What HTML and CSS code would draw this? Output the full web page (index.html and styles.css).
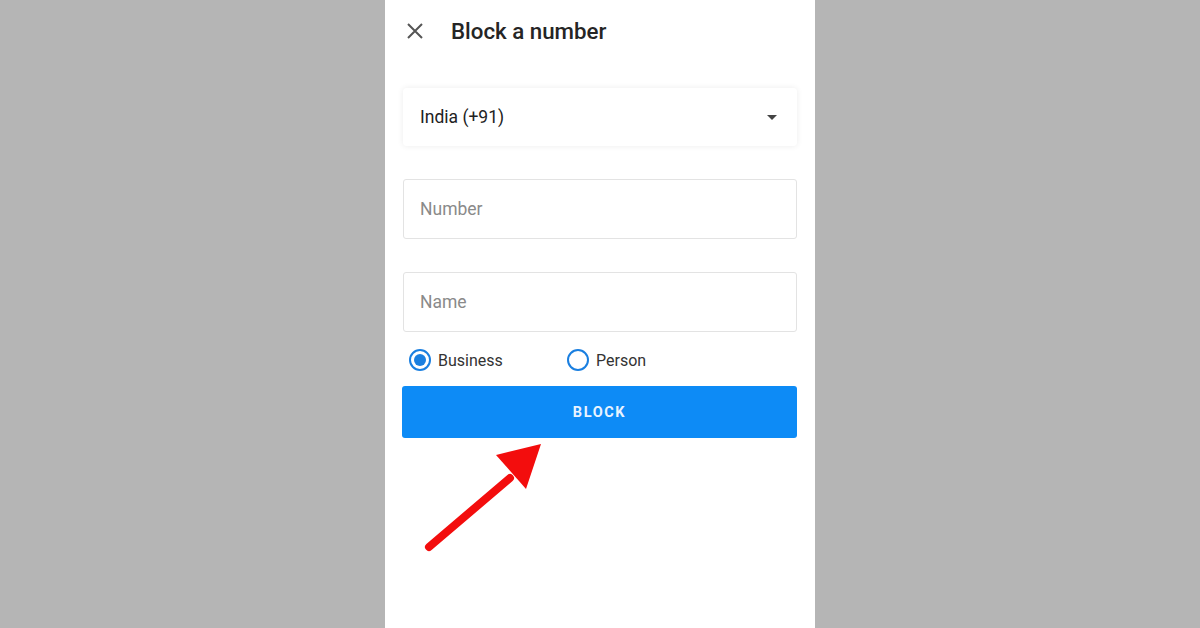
FILE: index.html
```html
<!DOCTYPE html>
<html lang="en">
<head>
  <meta charset="UTF-8">
  <meta name="viewport" content="width=device-width, initial-scale=1.0">
  <title>Block a number</title>
  <link rel="stylesheet" href="styles.css">
</head>
<body>

  <div class="screen">
    <div class="header">
      <svg class="close" width="16" height="16" viewBox="0 0 16 16">
        <path d="M1 1L15 15M15 1L1 15" stroke="#555" stroke-width="2" fill="none"/>
      </svg>
      <h2>Block a number</h2>
    </div>

    <div class="country">
      <span>India (+91)</span>
      <span class="caret"></span>
    </div>

    <div class="field">Number</div>
    <div class="field">Name</div>

    <div class="radios">
      <label class="radio"><span class="dot checked"></span>Business</label>
      <label class="radio"><span class="dot"></span>Person</label>
    </div>

    <button class="block-btn">BLOCK</button>

    <svg class="arrow" width="200" height="140" viewBox="0 0 200 140">
      <line x1="44" y1="117" x2="125" y2="48" stroke="#f30d0d" stroke-width="8" stroke-linecap="round"/>
      <polygon points="156,14 111,25 141,59" fill="#f30d0d"/>
    </svg>
  </div>

</body>
</html>
```

FILE: styles.css
```css
body {
  font-family: Roboto, Arial, sans-serif;
  background-color: #b5b5b5;
  margin: 0;
  display: flex;
  justify-content: center;
  height: 628px;
  overflow: hidden;
}

.screen {
  position: relative;
  background-color: #fff;
  width: 430px;
  height: 628px;
  padding: 0 18px;
  box-sizing: border-box;
}

.header {
  display: flex;
  align-items: center;
  height: 62px;
  padding-left: 4px;
}

.close {
  margin-right: 28px;
}

h2 {
  margin: 0;
  font-size: 22.3px;
  font-weight: 500;
  color: #252525;
}

.country {
  display: flex;
  align-items: center;
  justify-content: space-between;
  margin-top: 26px;
  height: 58px;
  padding: 0 20px 0 17px;
  border-radius: 4px;
  box-shadow: 0 0 6px rgba(0, 0, 0, 0.08);
  font-size: 17.5px;
  color: #222;
}

.caret {
  width: 0;
  height: 0;
  border-left: 5px solid transparent;
  border-right: 5px solid transparent;
  border-top: 5px solid #444;
}

.field {
  display: flex;
  align-items: center;
  height: 58px;
  margin-top: 33px;
  padding-left: 16px;
  border: 1px solid #e3e3e3;
  border-radius: 3px;
  font-size: 17.5px;
  color: #8a8a8a;
}

.radios {
  display: flex;
  height: 54px;
  align-items: center;
  padding: 2px 0 0 6px;
  box-sizing: border-box;
}

.radio {
  display: flex;
  align-items: center;
  font-size: 16px;
  color: #333;
  width: 158px;
}

.dot {
  width: 22px;
  height: 22px;
  border: 2px solid #1a7fe0;
  border-radius: 50%;
  margin-right: 7px;
  box-sizing: border-box;
  position: relative;
}

.dot.checked::after {
  content: "";
  position: absolute;
  top: 3px;
  left: 3px;
  width: 12px;
  height: 12px;
  border-radius: 50%;
  background-color: #1a7fe0;
}

.block-btn {
  display: block;
  width: 395px;
  margin-left: -1px;
  height: 52px;
  border: none;
  border-radius: 3px;
  background-color: #0d8bf6;
  color: #e8f3ff;
  font-family: Roboto, Arial, sans-serif;
  font-size: 14.5px;
  font-weight: 700;
  letter-spacing: 1.6px;
}

.arrow {
  position: absolute;
  left: 0;
  top: 430px;
}
```
